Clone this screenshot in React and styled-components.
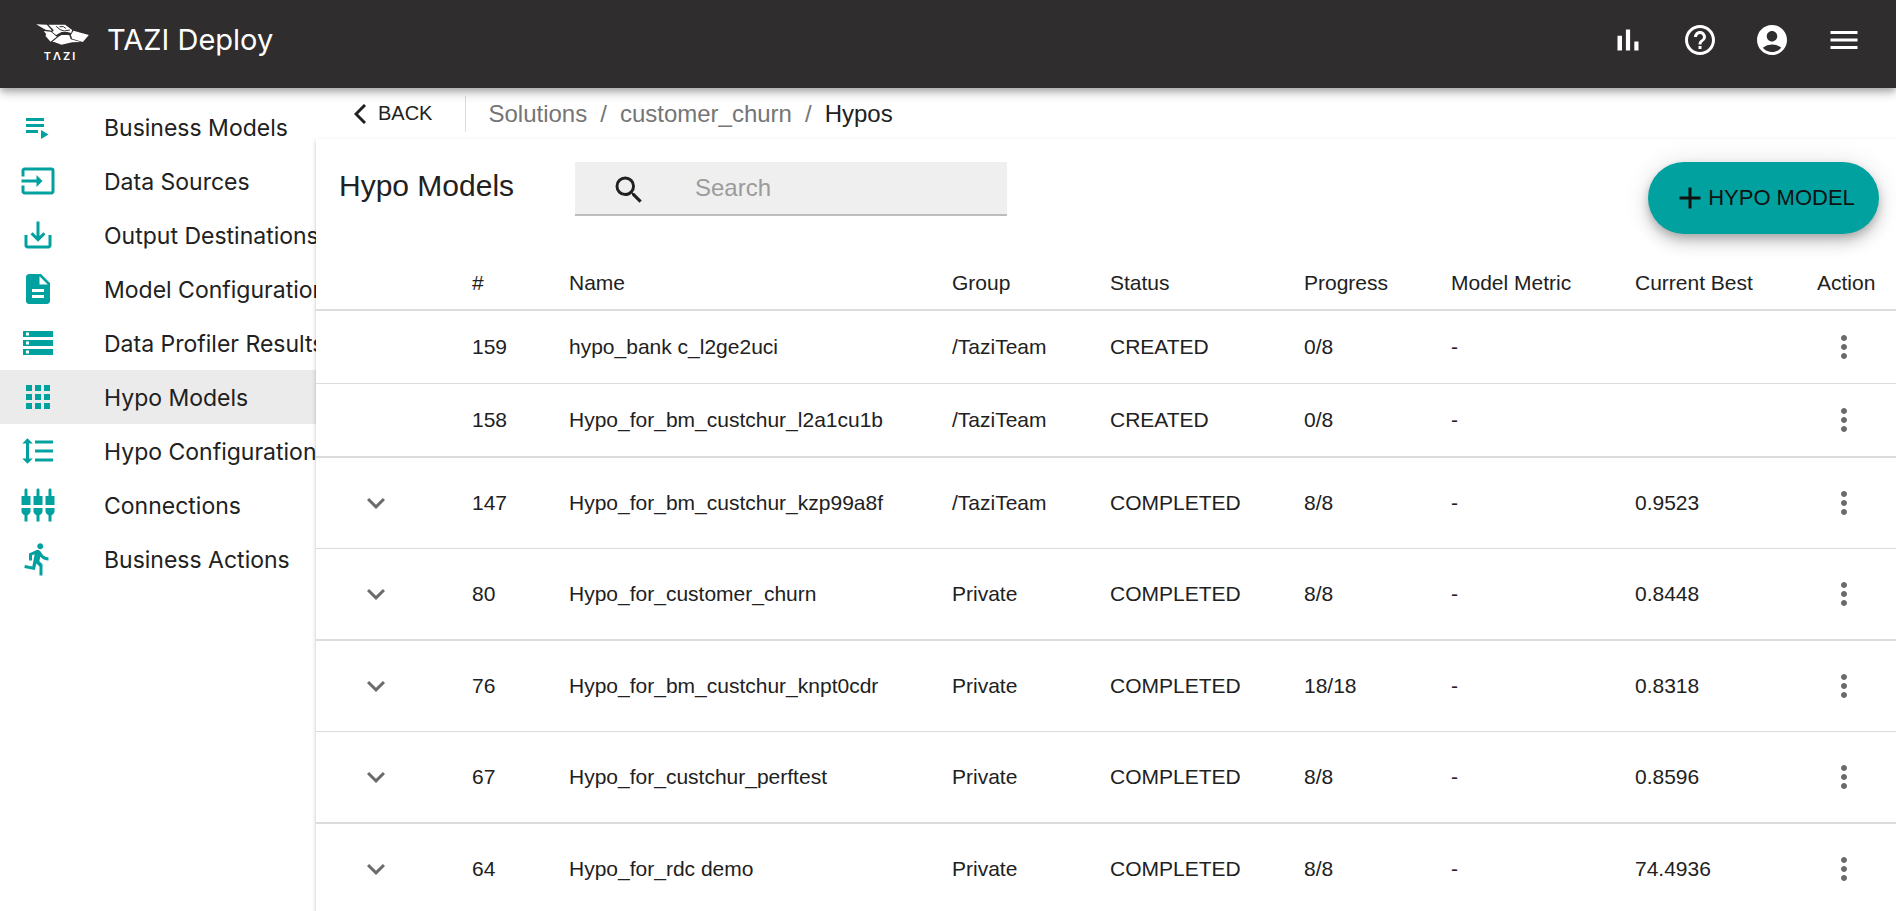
import styled, { createGlobalStyle } from "styled-components";
import {
  MdAccountCircle,
  MdAdd,
  MdApps,
  MdDescription,
  MdDirectionsRun,
  MdExpandMore,
  MdHelpOutline,
  MdInput,
  MdMenu,
  MdMoreVert,
  MdSaveAlt,
  MdSearch,
  MdSettingsInputComponent,
  MdStorage,
} from "react-icons/md";

const PlaylistIcon = () => (
  <svg viewBox="0 0 24 24" fill="currentColor">
    <path d="M4 10h12v2H4zM4 6h12v2H4zM4 14h8v2H4zM14 14v6l5-3z" />
  </svg>
);

const LineSpacingIcon = () => (
  <svg viewBox="0 0 24 24" fill="currentColor">
    <path d="M6 7h2.500L5 3.500 1.500 7H4v10H1.500L5 20.500 8.500 17H6V7zm4-2v2h12V5H10zm0 14h12v-2H10v2zm0-6h12v-2H10v2z" />
  </svg>
);

const BarsIcon = () => (
  <svg viewBox="0 0 24 24" fill="currentColor">
    <path d="M5 9.200h3V19H5zM10.600 5h2.800v14h-2.800zm5.600 8H19v6h-2.800z" />
  </svg>
);

const links = [
  { label: "Business Models", icon: PlaylistIcon },
  { label: "Data Sources", icon: MdInput },
  { label: "Output Destinations", icon: MdSaveAlt },
  { label: "Model Configurations", icon: MdDescription },
  { label: "Data Profiler Results", icon: MdStorage },
  { label: "Hypo Models", icon: MdApps, active: true },
  { label: "Hypo Configurations", icon: LineSpacingIcon },
  { label: "Connections", icon: MdSettingsInputComponent },
  { label: "Business Actions", icon: MdDirectionsRun },
];

const hypos = [
  { id: 159, name: "hypo_bank c_l2ge2uci", group: "/TaziTeam", status: "CREATED", progress: "0/8" },
  { id: 158, name: "Hypo_for_bm_custchur_l2a1cu1b", group: "/TaziTeam", status: "CREATED", progress: "0/8" },
  { id: 147, name: "Hypo_for_bm_custchur_kzp99a8f", group: "/TaziTeam", status: "COMPLETED", progress: "8/8", best: "0.9523" },
  { id: 80, name: "Hypo_for_customer_churn", group: "Private", status: "COMPLETED", progress: "8/8", best: "0.8448" },
  { id: 76, name: "Hypo_for_bm_custchur_knpt0cdr", group: "Private", status: "COMPLETED", progress: "18/18", best: "0.8318" },
  { id: 67, name: "Hypo_for_custchur_perftest", group: "Private", status: "COMPLETED", progress: "8/8", best: "0.8596" },
  { id: 64, name: "Hypo_for_rdc demo", group: "Private", status: "COMPLETED", progress: "8/8", best: "74.4936" },
];

const Logo = () => (
  <LogoBox>
    <svg width="53" height="21" viewBox="0 0 158 63" fill="#fff" aria-hidden="true">
      <path d="M0 1L32 2L48 20L28 17Z" />
      <path d="M37 2H87L108 18L105 27L94 24H76L60 33L48 24L53 19Z" />
      <path d="M23 21L44 23L62 38L43 53L28 36L30 31Z" />
      <path d="M112 20L158 33L140 54L108 44L104 33Z" />
      <path d="M66 39L76 33H99L104 46L134 54L108 55L76 62L54 54L48 54Z" />
      <g fill="none" stroke="#2f2d2e" strokeWidth="3">
        <path d="M60 7L72 17L84 21L101 18" />
        <path d="M70 8L82 8L93 17" />
      </g>
      <circle cx="91" cy="15" r="3" />
    </svg>
    <LogoText>TΛZI</LogoText>
  </LogoBox>
);

const App = () => {
  return (
    <>
      <GlobalStyle />
      <Header>
        <Logo />
        <Brand>TAZI Deploy</Brand>
        <HeaderActions>
          <IconButton aria-label="Charts"><BarsIcon /></IconButton>
          <IconButton aria-label="Help"><MdHelpOutline /></IconButton>
          <IconButton aria-label="Account"><MdAccountCircle /></IconButton>
          <IconButton aria-label="Menu"><MdMenu /></IconButton>
        </HeaderActions>
      </Header>
      <Layout>
        <Sidebar>
          {links.map(({ label, icon: Icon, active }) => (
            <SidebarLink href="#" key={label} $active={active}>
              <Icon />
              <span>{label}</span>
            </SidebarLink>
          ))}
        </Sidebar>
        <Main>
          <Navigation>
            <BackButton>
              <svg width="12" height="20" viewBox="0 0 12 20" fill="none" stroke="currentColor" strokeWidth="3">
                <path d="M11 1L2 10l9 9" />
              </svg>
              BACK
            </BackButton>
            <Breadcrumbs>
              <a href="#">Solutions</a>
              <span>/</span>
              <a href="#">customer_churn</a>
              <span>/</span>
              <strong>Hypos</strong>
            </Breadcrumbs>
          </Navigation>
          <Panel>
            <Toolbar>
              <Title>Hypo Models</Title>
              <SearchBox>
                <MdSearch />
                <input type="text" placeholder="Search" aria-label="Search" />
              </SearchBox>
              <AddButton>
                <MdAdd />
                HYPO MODEL
              </AddButton>
            </Toolbar>
            <Table>
              <colgroup>
                <Col $w="132px" />
                <Col $w="97px" />
                <Col />
                <Col $w="158px" />
                <Col $w="194px" />
                <Col $w="147px" />
                <Col $w="184px" />
                <Col $w="182px" />
                <Col $w="103px" />
              </colgroup>
              <thead>
                <tr>
                  <th aria-label="Expand" />
                  <th>#</th>
                  <th>Name</th>
                  <th>Group</th>
                  <th>Status</th>
                  <th>Progress</th>
                  <th>Model Metric</th>
                  <th>Current Best</th>
                  <th>Action</th>
                </tr>
              </thead>
              <tbody>
                {hypos.map((hypo) => (
                  <Row key={hypo.id} $tall={hypo.best}>
                    <td>
                      {hypo.best && (
                        <RowButton aria-label="Expand row"><MdExpandMore /></RowButton>
                      )}
                    </td>
                    <td>{hypo.id}</td>
                    <td>{hypo.name}</td>
                    <td>{hypo.group}</td>
                    <td>{hypo.status}</td>
                    <td>{hypo.progress}</td>
                    <td>-</td>
                    <td>{hypo.best}</td>
                    <td>
                      <RowButton aria-label="Row actions"><MdMoreVert /></RowButton>
                    </td>
                  </Row>
                ))}
              </tbody>
            </Table>
          </Panel>
        </Main>
      </Layout>
    </>
  );
};

const GlobalStyle = createGlobalStyle`
  * {
    box-sizing: border-box;
  }
  html, body, #root {
    height: 100%;
  }
  body {
    margin: 0;
    overflow: hidden;
    background: #fff;
    color: #212121;
    font-family: "Liberation Sans", Arial, sans-serif;
    font-size: 21px;
  }
  #root {
    display: flex;
    flex-direction: column;
  }
  a {
    color: inherit;
    text-decoration: none;
  }
  button {
    padding: 0;
    border: none;
    background: none;
    color: inherit;
    font: inherit;
    cursor: pointer;
  }
  svg {
    display: block;
    flex-shrink: 0;
  }
`;

const Header = styled.header`
  display: flex;
  align-items: center;
  flex-shrink: 0;
  height: 88px;
  padding: 0 34px 8px 36px;
  background: #2f2d2e;
  color: #fff;
  position: relative;
  z-index: 2;
  box-shadow: 0 3px 6px -1px rgba(0, 0, 0, 0.2), 0 6px 8px rgba(0, 0, 0, 0.14), 0 2px 15px rgba(0, 0, 0, 0.12);
`;

const LogoBox = styled.div`
  display: flex;
  flex-direction: column;
  align-items: center;
  gap: 6px;
  padding-top: 5px;
  width: 53px;
`;

const LogoText = styled.span`
  margin-right: 4px;
  font: 600 11px/10px Inter, sans-serif;
  letter-spacing: 2px;
`;

const Brand = styled.span`
  margin-left: 18px;
  font: 400 29px/36px Inter, sans-serif;
`;

const HeaderActions = styled.div`
  display: flex;
  gap: 36px;
  margin-left: auto;
`;

const IconButton = styled.button`
  svg {
    width: 36px;
    height: 36px;
  }
`;

const Layout = styled.div`
  display: grid;
  grid-template-columns: 316px minmax(0, 1fr);
  flex: 1;
  min-height: 0;
`;

const Sidebar = styled.nav`
  padding-top: 12px;
  overflow: hidden;
`;

const SidebarLink = styled.a`
  display: flex;
  align-items: center;
  gap: 48px;
  height: 54px;
  padding-left: 20px;
  background: ${({ $active }) => ($active ? "#ebebeb" : "transparent")};
  font: 400 23px/36px Inter, sans-serif;
  white-space: nowrap;
  span {
    padding-top: 2px;
  }
  svg {
    width: 36px;
    height: 36px;
    color: #00a19f;
  }
`;

const Main = styled.main`
  display: flex;
  flex-direction: column;
  min-height: 0;
`;

const Navigation = styled.div`
  display: flex;
  align-items: center;
  flex-shrink: 0;
  height: 51px;
`;

const BackButton = styled.button`
  display: flex;
  align-items: center;
  gap: 12px;
  height: 36px;
  padding: 0 33px 0 38px;
  border-right: 1px solid #dcdcdc;
  font-size: 20px;
`;

const Breadcrumbs = styled.nav`
  display: flex;
  gap: 13px;
  padding-left: 22px;
  color: #757575;
  font-size: 24px;
  line-height: 36px;
  strong {
    color: #212121;
    font-weight: 400;
  }
`;

const Panel = styled.section`
  flex: 1;
  min-height: 0;
  overflow: hidden;
  background: #fff;
  box-shadow: 0 2px 4px rgba(0, 0, 0, 0.25);
`;

const Toolbar = styled.div`
  display: flex;
  align-items: flex-start;
  padding: 23px 17px 18px 23px;
`;

const Title = styled.h1`
  margin: 0;
  width: 236px;
  padding-top: 6px;
  font-size: 30px;
  font-weight: 400;
  line-height: 36px;
`;

const SearchBox = styled.label`
  display: flex;
  align-items: center;
  gap: 48px;
  width: 432px;
  height: 54px;
  padding-left: 36px;
  background: #efefef;
  border-bottom: 2px solid #bdbdbd;
  svg {
    width: 36px;
    height: 36px;
    margin-top: 4px;
  }
  input {
    flex: 1;
    min-width: 0;
    padding: 0;
    border: none;
    outline: none;
    background: none;
    color: inherit;
    font: inherit;
    font-size: 24px;
  }
  input::placeholder {
    color: #9b9b9b;
  }
`;

const AddButton = styled.button`
  display: flex;
  align-items: center;
  justify-content: center;
  width: 231px;
  height: 72px;
  margin-left: auto;
  border-radius: 36px;
  background: #00a19f;
  color: #111;
  font-size: 22px;
  box-shadow: 0 4px 8px -1px rgba(0, 0, 0, 0.2), 0 9px 15px rgba(0, 0, 0, 0.14), 0 2px 27px rgba(0, 0, 0, 0.12);
  svg {
    width: 36px;
    height: 36px;
  }
`;

const Table = styled.table`
  width: 100%;
  table-layout: fixed;
  border-collapse: separate;
  border-spacing: 0;
  line-height: 30px;
  th,
  td {
    padding: 0 0 0 24px;
    border-bottom: 1px solid #dcdcdc;
    text-align: left;
    font-weight: 400;
    white-space: nowrap;
  }
  th {
    height: 59px;
    padding-top: 4px;
    border-bottom-width: 2px;
  }
`;

const Col = styled.col`
  width: ${({ $w }) => $w || "auto"};
`;

const Row = styled.tr`
  height: ${({ $tall }) => ($tall ? "91px" : "73px")};
  td:first-child {
    padding-left: 42px;
  }
  td:last-child {
    padding-left: 33px;
  }
  &:nth-child(even) {
    height: ${({ $tall }) => ($tall ? "92px" : "74px")};
  }
  &:nth-child(even) td {
    border-bottom-width: 2px;
  }
`;

const RowButton = styled.button`
  display: block;
  color: #6b6b6b;
  svg {
    width: 36px;
    height: 36px;
  }
`;

export default App;
